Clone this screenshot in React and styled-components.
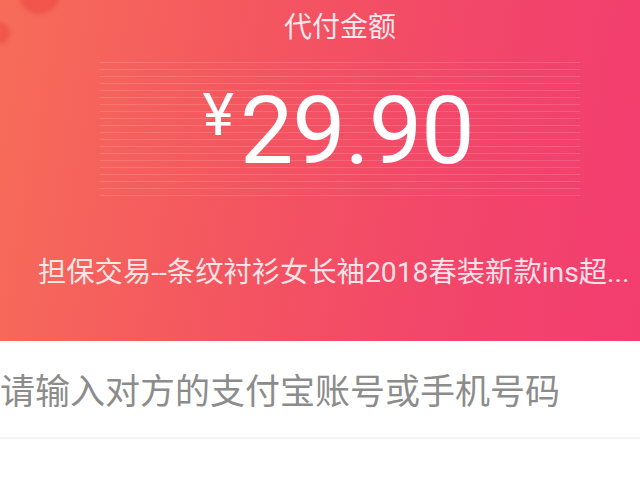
import React from 'react'
import styled, { createGlobalStyle } from 'styled-components'

const GlobalStyle = createGlobalStyle`
  html, body {
    margin: 0;
    padding: 0;
    background: #fff;
    font-family: Roboto, "Noto Sans CJK SC", "Noto Sans", sans-serif;
  }
`;

const Page = styled.div`
  width: 640px;
  height: 480px;
  overflow: hidden;
  background: #fff;
`;

const Header = styled.header`
  position: relative;
  height: 341px;
  overflow: hidden;
  background: linear-gradient(100deg, #f76d59 0%, #f4585f 35%, #f2466a 70%, #f33d70 100%);
  padding-top: 9px;
  box-sizing: border-box;
`;

const Blob = styled.span`
  position: absolute;
  left: ${p => p.x}px;
  top: ${p => p.y}px;
  width: ${p => p.size}px;
  height: ${p => p.size}px;
  border-radius: 50%;
  background: rgba(232, 60, 60, 0.45);
  filter: blur(2px);
`;

const Hero = styled.div`
  display: flex;
  flex-direction: column;
  align-items: center;
  padding-left: 40px;
`;

const Title = styled.div`
  font-size: 28px;
  line-height: 38px;
  color: rgba(255, 255, 255, 0.88);
`;

const AmountBox = styled.div`
  margin-top: 15px;
  width: 480px;
  height: 136px;
  display: flex;
  justify-content: center;
  align-items: center;
  background: repeating-linear-gradient(
    180deg,
    rgba(255, 255, 255, 0.14) 0px,
    rgba(255, 255, 255, 0.14) 1px,
    transparent 1px,
    transparent 7px
  );
`;

const Amount = styled.div`
  display: flex;
  align-items: flex-start;
  color: #fff;
  margin-right: 4px;
`;

const Currency = styled.span`
  font-size: 60px;
  line-height: 60px;
  margin-top: 2px;
  margin-right: 6px;
`;

const Digits = styled.span`
  font-size: 95px;
  line-height: 95px;
  letter-spacing: -1px;
`;

const Subtitle = styled.div`
  margin-top: 57px;
  padding-left: 38px;
  font-size: 28.3px;
  line-height: 36px;
  color: rgba(255, 255, 255, 0.85);
  white-space: nowrap;
`;

const InputRow = styled.div`
  height: 98px;
  border-bottom: 2px solid #f4f4f4;
  display: flex;
  align-items: center;
  box-sizing: border-box;
`;

const Placeholder = styled.div`
  font-size: 35px;
  color: #8c8c8c;
  padding-bottom: 2px;
`;

export default function App() {
  return (
    <Page>
      <GlobalStyle />
      <Header>
        <Blob x={18} y={-28} size={42} />
        <Blob x={-12} y={22} size={22} />
        <Hero>
          <Title>代付金额</Title>
          <AmountBox>
            <Amount>
              <Currency>¥</Currency>
              <Digits>29.90</Digits>
            </Amount>
          </AmountBox>
        </Hero>
        <Subtitle>担保交易--条纹衬衫女长袖2018春装新款ins超...</Subtitle>
      </Header>
      <InputRow>
        <Placeholder>请输入对方的支付宝账号或手机号码</Placeholder>
      </InputRow>
    </Page>
  )
}
